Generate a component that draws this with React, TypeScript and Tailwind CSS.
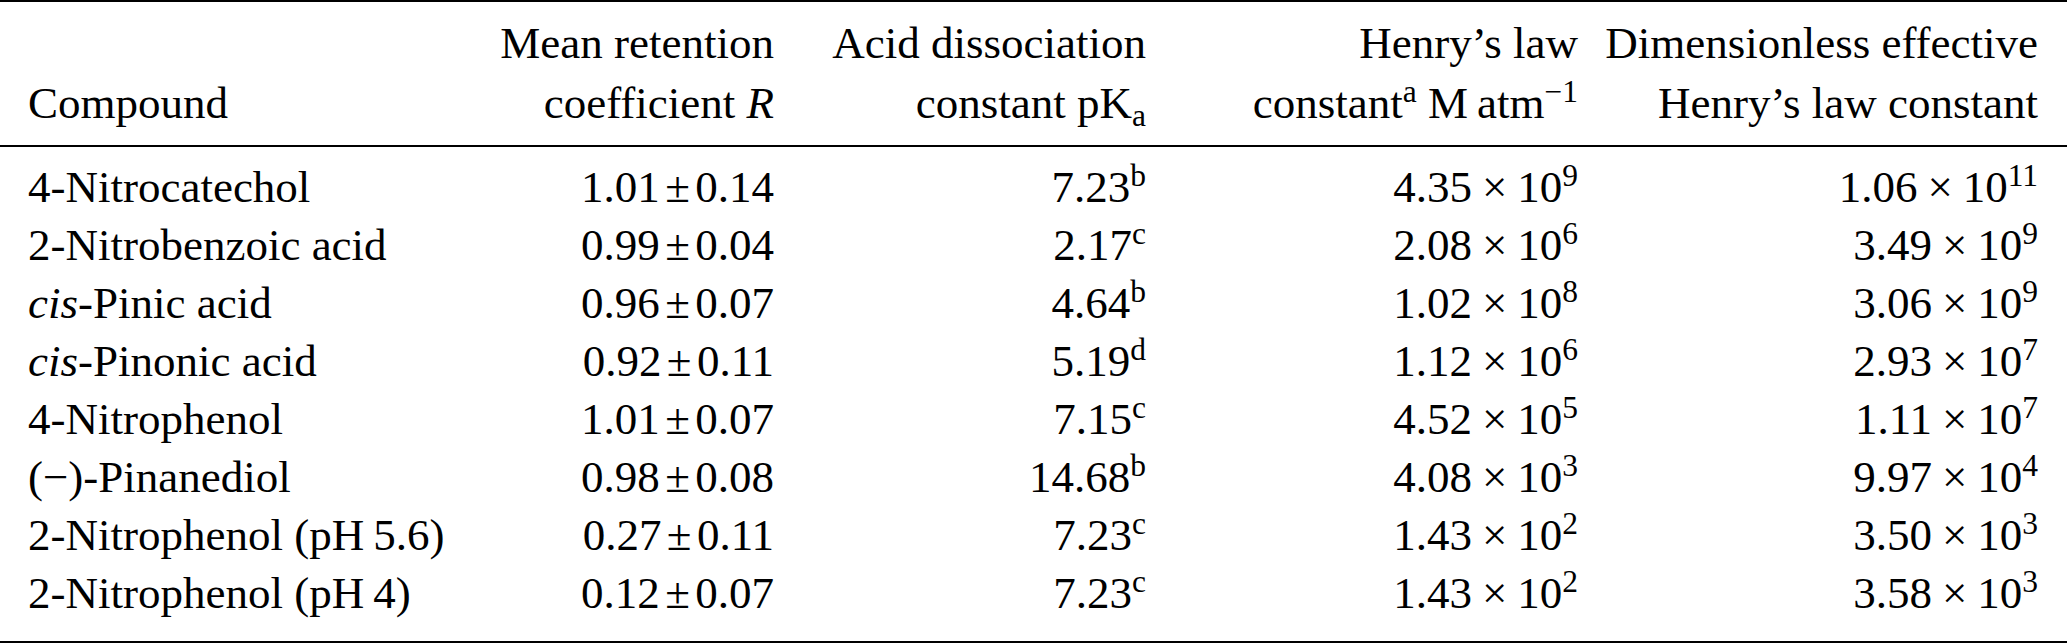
import type { ReactNode } from "react";

type Row = {
  name: ReactNode;
  r: [string, string];
  pka: [string, string];
  henry: [string, string];
  dimless: [string, string];
};

const rows: Row[] = [
  { name: "4-Nitrocatechol", r: ["1.01", "0.14"], pka: ["7.23", "b"], henry: ["4.35", "9"], dimless: ["1.06", "11"] },
  { name: "2-Nitrobenzoic acid", r: ["0.99", "0.04"], pka: ["2.17", "c"], henry: ["2.08", "6"], dimless: ["3.49", "9"] },
  {
    name: (
      <>
        <i>cis</i>-Pinic acid
      </>
    ),
    r: ["0.96", "0.07"],
    pka: ["4.64", "b"],
    henry: ["1.02", "8"],
    dimless: ["3.06", "9"],
  },
  {
    name: (
      <>
        <i>cis</i>-Pinonic acid
      </>
    ),
    r: ["0.92", "0.11"],
    pka: ["5.19", "d"],
    henry: ["1.12", "6"],
    dimless: ["2.93", "7"],
  },
  { name: "4-Nitrophenol", r: ["1.01", "0.07"], pka: ["7.15", "c"], henry: ["4.52", "5"], dimless: ["1.11", "7"] },
  { name: "(\u2212)-Pinanediol", r: ["0.98", "0.08"], pka: ["14.68", "b"], henry: ["4.08", "3"], dimless: ["9.97", "4"] },
  { name: "2-Nitrophenol (pH\u20095.6)", r: ["0.27", "0.11"], pka: ["7.23", "c"], henry: ["1.43", "2"], dimless: ["3.50", "3"] },
  { name: "2-Nitrophenol (pH\u20094)", r: ["0.12", "0.07"], pka: ["7.23", "c"], henry: ["1.43", "2"], dimless: ["3.58", "3"] },
];

function Sup({ children }: { children: ReactNode }) {
  return <sup className="text-[70%]">{children}</sup>;
}

function Sci({ m, e }: { m: string; e: string }) {
  return (
    <span>
      {m}
      <span className="mx-[0.22em]">×</span>
      10
      <Sup>{e}</Sup>
    </span>
  );
}

const grid =
  "grid grid-cols-[450px_296px_372px_432px_1fr] pl-[28px] pr-[29px] whitespace-nowrap";

export default function App() {
  return (
    <div className="h-[644px] w-[2067px] overflow-hidden bg-white font-['Liberation_Serif',serif] text-[45px] text-black">
      <div className="h-[2px] bg-black" />

      {/* header */}
      <div className={`${grid} pt-[11px] pb-[12px] leading-[60px]`}>
        <div className="self-end">Compound</div>
        <div className="text-right">
          Mean retention
          <br />
          coefficient <i>R</i>
        </div>
        <div className="text-right">
          Acid dissociation
          <br />
          constant pK<sub className="text-[70%]">a</sub>
        </div>
        <div className="text-right">
          Henry’s law
          <br />
          constant<Sup>a</Sup> M{"\u2009"}atm<Sup>−1</Sup>
        </div>
        <div className="text-right">
          Dimensionless effective
          <br />
          Henry’s law constant
        </div>
      </div>

      <div className="h-[2px] bg-black" />

      {/* body */}
      <div className={`${grid} pt-[11px] pb-[19px] leading-[58px]`}>
        {rows.map((row, i) => (
          <div key={i} className="contents">
            <div>{row.name}</div>
            <div className="text-right">
              {row.r[0]}
              <span className="mx-[0.12em]">±</span>
              {row.r[1]}
            </div>
            <div className="text-right">
              {row.pka[0]}
              <Sup>{row.pka[1]}</Sup>
            </div>
            <div className="text-right">
              <Sci m={row.henry[0]} e={row.henry[1]} />
            </div>
            <div className="text-right">
              <Sci m={row.dimless[0]} e={row.dimless[1]} />
            </div>
          </div>
        ))}
      </div>

      <div className="h-[2px] bg-black" />
    </div>
  );
}
